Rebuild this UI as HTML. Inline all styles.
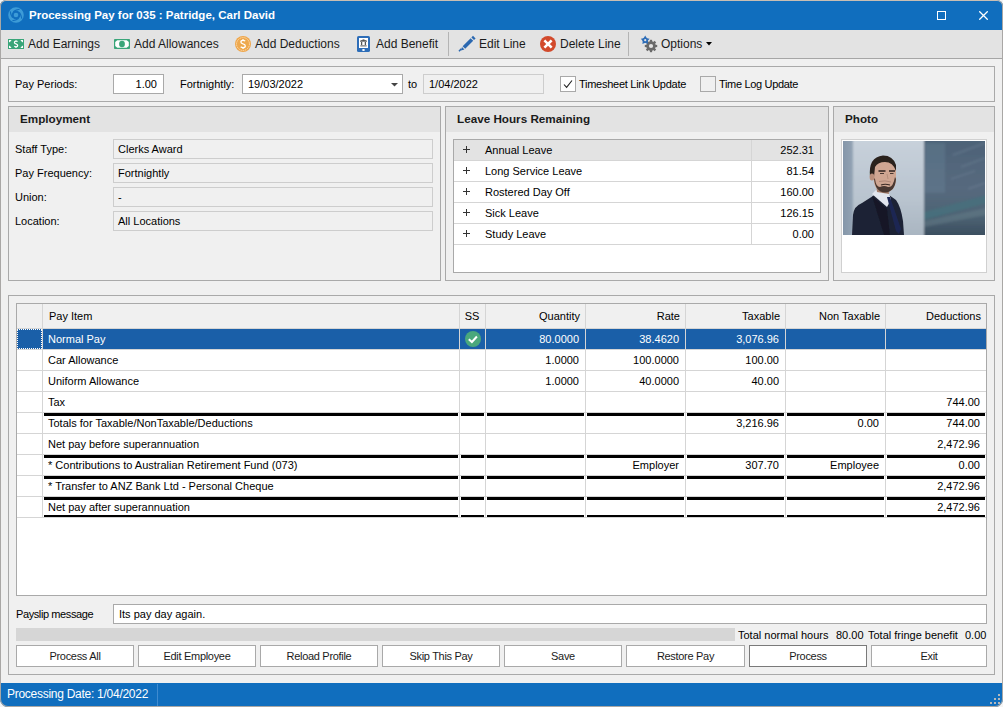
<!DOCTYPE html><html><head><meta charset="utf-8"><title>Processing Pay</title><style>
*{box-sizing:border-box;margin:0;padding:0}
html,body{width:1003px;height:707px;overflow:hidden;background:#f4f4f4}
body{font-family:"Liberation Sans",sans-serif;font-size:11px;color:#000;position:relative}
.a{position:absolute}
.t{position:absolute;white-space:nowrap;line-height:13px;margin-top:1px}
.tbt{position:absolute;top:37px;font-size:12px;line-height:14px;color:#1b1b1b;white-space:nowrap}
.grp{position:absolute;border:1px solid #a9a9a9;background:#f0f0f0}
.gh{position:absolute;left:0;top:0;right:0;height:25px;background:#e3e3e3}
.ght{position:absolute;font-weight:bold;font-size:11.7px;line-height:13px;white-space:nowrap;color:#1b1b1b}
.ro{position:absolute;border:1px solid #cdcdcd;background:#f0f0f0}
.btn{position:absolute;top:645px;height:22px;border:1px solid #a9a9a9;background:#fff;text-align:center;line-height:21px;font-size:11px;color:#1b1b1b;letter-spacing:-0.3px}
.gl{position:absolute;background:#d5d5d5}
.bl{position:absolute;background:#000;height:3px}
</style></head><body><div id="win" style="position:absolute;left:0;top:0;width:1003px;height:707px;border-radius:6px 6px 8px 8px;overflow:hidden;background:#f0f0f0">
<div class="a" style="left:0;top:0;width:1003px;height:30px;background:#106ebe"></div>
<svg class="a" style="left:8px;top:7px" width="16" height="16" viewBox="0 0 16 16">
<circle cx="8" cy="8" r="6.1" fill="none" stroke="#3d9bd7" stroke-width="3.4"/>
<circle cx="8" cy="8" r="2.3" fill="#3d9bd7"/>
<g fill="none" stroke="#106ebe" stroke-width="1.1">
<path d="M5.2 4.6Q8 2.6 11.6 2.2"/><path d="M11.4 5.2Q13.4 8 13.8 11.6"/><path d="M10.8 11.4Q8 13.4 4.4 13.8"/><path d="M4.6 10.8Q2.6 8 2.2 4.4"/>
</g></svg>
<div class="t" style="left:29px;top:7px;font-size:11.5px;font-weight:bold;color:#fff;line-height:14px">Processing Pay for 035 : Patridge, Carl David</div>
<div class="a" style="left:937px;top:11px;width:9px;height:9px;border:1px solid #fff"></div>
<svg class="a" style="left:979px;top:11px" width="9" height="9" viewBox="0 0 9 9"><path d="M0.3 0.3L8.7 8.7M8.7 0.3L0.3 8.7" stroke="#fff" stroke-width="1.25"/></svg>
<div class="a" style="left:0;top:30px;width:1003px;height:28px;background:#e3e3e3"></div>
<div class="a" style="left:0;top:58px;width:1003px;height:1px;background:#a6a6a6"></div>
<div class="tbt" style="left:28px">Add Earnings</div>
<div class="tbt" style="left:134px">Add Allowances</div>
<div class="tbt" style="left:255px">Add Deductions</div>
<div class="tbt" style="left:376px">Add Benefit</div>
<div class="tbt" style="left:479px">Edit Line</div>
<div class="tbt" style="left:560px">Delete Line</div>
<div class="tbt" style="left:661px">Options</div>
<div class="a" style="left:448px;top:32px;width:1px;height:24px;background:#b4b4b4"></div>
<div class="a" style="left:628px;top:32px;width:1px;height:24px;background:#b4b4b4"></div>
<svg class="a" style="left:8px;top:39px" width="16" height="10" viewBox="0 0 16 10"><rect width="16" height="10" fill="#3aa579"/>
<path d="M1 1h2.6Q2.6 2.6 1 3.4ZM15 1h-2.6Q13.4 2.6 15 3.4ZM1 9h2.6Q2.6 7.4 1 6.6ZM15 9h-2.6Q13.4 7.4 15 6.6Z" fill="#fff"/>
<path d="M9.6 2.6Q8.9 2.1 8 2.1Q6.4 2.1 6.4 3.4Q6.4 4.4 8 4.9Q9.7 5.4 9.7 6.6Q9.7 7.9 8 7.9Q7 7.9 6.3 7.3M8 1.2v1M8 7.9v1" fill="none" stroke="#fff" stroke-width="1.2"/></svg>
<svg class="a" style="left:114px;top:39px" width="16" height="10" viewBox="0 0 16 10"><rect width="16" height="10" rx="0.8" fill="#3aa579"/>
<path d="M3.3 1.2H12.7L14.8 3V7L12.7 8.8H3.3L1.2 7V3Z" fill="#fff"/><ellipse cx="8" cy="5" rx="2.9" ry="3.2" fill="#3aa579"/></svg>
<svg class="a" style="left:235px;top:36px" width="16" height="16" viewBox="0 0 16 16"><circle cx="8" cy="8" r="8" fill="#efa64a"/><circle cx="8" cy="8" r="6.4" fill="none" stroke="#fde6c4" stroke-width="0.9" stroke-dasharray="1.4 0.8"/><circle cx="8" cy="8" r="5.6" fill="#eda94f"/>
<path d="M10.2 5.1Q9.4 4.3 8 4.3Q5.9 4.3 5.9 5.9Q5.9 7.2 8 7.8Q10.3 8.4 10.3 9.9Q10.3 11.6 8 11.6Q6.5 11.6 5.7 10.8M8 3v1.4M8 11.6v1.4" fill="none" stroke="#fff" stroke-width="1.3"/></svg>
<svg class="a" style="left:357px;top:36px" width="13" height="16" viewBox="0 0 13 16"><rect x="0" y="0" width="13" height="16" rx="1.6" fill="#2d6db8"/><rect x="2" y="2" width="9" height="10" fill="#fff"/>
<path d="M3.2 5.2L6.5 3.7L9.8 5.2Z" fill="#555" stroke="#555" stroke-width="0.8"/><path d="M4.6 6v3M8.4 6v3" stroke="#555" stroke-width="1.3"/><path d="M3.3 9.9h6.4" stroke="#555" stroke-width="1"/><ellipse cx="6.5" cy="14" rx="1.4" ry="0.9" fill="#fff"/></svg>
<svg class="a" style="left:458px;top:34px" width="18" height="18" viewBox="0 0 18 18"><path d="M4.6 12.2L12.6 4.2L15.2 6.8L7.2 14.8Z" fill="#2b68b0"/><path d="M13.4 3.4L15 1.8L17.6 4.4L16 6Z" fill="#2b68b0"/><path d="M4 13L6.4 15.4L3 16.6Z" fill="#2b68b0"/><path d="M1 17.2L3.4 14.8" stroke="#2b68b0" stroke-width="1.6"/></svg>
<svg class="a" style="left:540px;top:36px" width="16" height="16" viewBox="0 0 16 16"><circle cx="8" cy="8" r="8" fill="#d24a2c"/><path d="M5.3 5.3L10.7 10.7M10.7 5.3L5.3 10.7" stroke="#fff" stroke-width="2.6" stroke-linecap="square"/></svg>
<svg class="a" style="left:640px;top:35px" width="18" height="18" viewBox="0 0 18 18">
<g transform="translate(11 11)"><g fill="#6a6a6a"><rect x="-1.1" y="-6.2" width="2.2" height="12.4"/><rect x="-6.2" y="-1.1" width="12.4" height="2.2"/><rect x="-1.1" y="-6.2" width="2.2" height="12.4" transform="rotate(45)"/><rect x="-1.1" y="-6.2" width="2.2" height="12.4" transform="rotate(-45)"/><circle r="4.8"/></g><circle r="2.1" fill="#e3e3e3"/></g>
<g transform="translate(5.2 5.2)"><g fill="#2d6db8"><path d="M0 -4.6L1.6 -2L4.4 -1.4L2.4 0.9L2.8 3.8L0 2.6L-2.8 3.8L-2.4 0.9L-4.4 -1.4L-1.6 -2Z"/><circle r="2.6"/></g><circle r="1.1" fill="#e3e3e3"/></g></svg>
<svg class="a" style="left:706px;top:42px" width="6" height="4" viewBox="0 0 6 4"><path d="M0 0h6L3 3.5Z" fill="#000"/></svg>
<div class="grp" style="left:8px;top:66px;width:987px;height:36px"></div>
<div class="t" style="left:15px;top:77px">Pay Periods:</div>
<div class="a" style="left:113px;top:74px;width:51px;height:20px;background:#fff;border:1px solid #a9a9a9"></div>
<div class="t" style="left:113px;top:77px;width:44px;text-align:right">1.00</div>
<div class="t" style="left:180px;top:77px">Fortnightly:</div>
<div class="a" style="left:242px;top:74px;width:161px;height:20px;background:#fff;border:1px solid #a9a9a9"></div>
<div class="t" style="left:248px;top:77px">19/03/2022</div>
<svg class="a" style="left:391px;top:83px" width="7" height="4" viewBox="0 0 7 4"><path d="M0 0h7L3.5 3.5Z" fill="#444"/></svg>
<div class="t" style="left:408px;top:77px">to</div>
<div class="ro" style="left:423px;top:74px;width:121px;height:20px"></div>
<div class="t" style="left:429px;top:77px">1/04/2022</div>
<div class="a" style="left:560px;top:76px;width:16px;height:16px;background:#fff;border:1px solid #a9a9a9"></div>
<svg class="a" style="left:562px;top:78px" width="12" height="12" viewBox="0 0 12 12"><path d="M2 6.5L4.6 9.3L10 2.5" fill="none" stroke="#222" stroke-width="1.1"/></svg>
<div class="t" style="left:579px;top:77px;letter-spacing:-0.27px">Timesheet Link Update</div>
<div class="a" style="left:700px;top:76px;width:16px;height:16px;background:#f0f0f0;border:1px solid #a9a9a9"></div>
<div class="t" style="left:719px;top:77px;letter-spacing:-0.33px">Time Log Update</div>
<div class="grp" style="left:8px;top:106px;width:433px;height:175px"><div class="gh"></div></div>
<div class="ght" style="left:20px;top:112px">Employment</div>
<div class="t" style="left:15px;top:142px">Staff Type:</div>
<div class="ro" style="left:113px;top:139px;width:320px;height:20px"></div>
<div class="t" style="left:118px;top:142px">Clerks Award</div>
<div class="t" style="left:15px;top:166px">Pay Frequency:</div>
<div class="ro" style="left:113px;top:163px;width:320px;height:20px"></div>
<div class="t" style="left:118px;top:166px">Fortnightly</div>
<div class="t" style="left:15px;top:190px">Union:</div>
<div class="ro" style="left:113px;top:187px;width:320px;height:20px"></div>
<div class="t" style="left:118px;top:190px">-</div>
<div class="t" style="left:15px;top:214px">Location:</div>
<div class="ro" style="left:113px;top:211px;width:320px;height:20px"></div>
<div class="t" style="left:118px;top:214px">All Locations</div>
<div class="grp" style="left:445px;top:106px;width:384px;height:175px"><div class="gh"></div></div>
<div class="ght" style="left:457px;top:112px">Leave Hours Remaining</div>
<div class="a" style="left:453px;top:139px;width:368px;height:134px;background:#fff;border:1px solid #a9a9a9"></div>
<div class="a" style="left:454px;top:140px;width:366px;height:20px;background:#e3e3e3"></div>
<div class="gl" style="left:454px;top:160px;width:366px;height:1px"></div>
<div class="gl" style="left:751px;top:140px;width:1px;height:20px"></div>
<svg class="a" style="left:463px;top:146px" width="7" height="7" viewBox="0 0 7 7"><path d="M3.5 0v7M0 3.5h7" stroke="#333" stroke-width="1"/></svg>
<div class="t" style="left:485px;top:143px">Annual Leave</div>
<div class="t" style="left:752px;top:143px;width:62px;text-align:right">252.31</div>
<div class="gl" style="left:454px;top:181px;width:366px;height:1px"></div>
<div class="gl" style="left:751px;top:161px;width:1px;height:20px"></div>
<svg class="a" style="left:463px;top:167px" width="7" height="7" viewBox="0 0 7 7"><path d="M3.5 0v7M0 3.5h7" stroke="#333" stroke-width="1"/></svg>
<div class="t" style="left:485px;top:164px">Long Service Leave</div>
<div class="t" style="left:752px;top:164px;width:62px;text-align:right">81.54</div>
<div class="gl" style="left:454px;top:202px;width:366px;height:1px"></div>
<div class="gl" style="left:751px;top:182px;width:1px;height:20px"></div>
<svg class="a" style="left:463px;top:188px" width="7" height="7" viewBox="0 0 7 7"><path d="M3.5 0v7M0 3.5h7" stroke="#333" stroke-width="1"/></svg>
<div class="t" style="left:485px;top:185px">Rostered Day Off</div>
<div class="t" style="left:752px;top:185px;width:62px;text-align:right">160.00</div>
<div class="gl" style="left:454px;top:223px;width:366px;height:1px"></div>
<div class="gl" style="left:751px;top:203px;width:1px;height:20px"></div>
<svg class="a" style="left:463px;top:209px" width="7" height="7" viewBox="0 0 7 7"><path d="M3.5 0v7M0 3.5h7" stroke="#333" stroke-width="1"/></svg>
<div class="t" style="left:485px;top:206px">Sick Leave</div>
<div class="t" style="left:752px;top:206px;width:62px;text-align:right">126.15</div>
<div class="gl" style="left:454px;top:244px;width:366px;height:1px"></div>
<div class="gl" style="left:751px;top:224px;width:1px;height:20px"></div>
<svg class="a" style="left:463px;top:230px" width="7" height="7" viewBox="0 0 7 7"><path d="M3.5 0v7M0 3.5h7" stroke="#333" stroke-width="1"/></svg>
<div class="t" style="left:485px;top:227px">Study Leave</div>
<div class="t" style="left:752px;top:227px;width:62px;text-align:right">0.00</div>
<div class="grp" style="left:833px;top:106px;width:162px;height:175px"><div class="gh"></div></div>
<div class="ght" style="left:845px;top:112px">Photo</div>
<div class="a" style="left:841px;top:139px;width:146px;height:134px;background:#fff;border:1px solid #d0d0d0"></div>
<svg class="a" style="left:843px;top:141px" width="142" height="94" viewBox="0 0 142 94">
<defs>
<linearGradient id="lg1" x1="0" y1="0" x2="0" y2="1"><stop offset="0" stop-color="#c9d2dc"/><stop offset="0.6" stop-color="#b9c4cf"/><stop offset="1" stop-color="#a7b3bf"/></linearGradient>
<linearGradient id="lg2" x1="0" y1="0" x2="0" y2="1"><stop offset="0" stop-color="#4d6277"/><stop offset="0.5" stop-color="#56697e"/><stop offset="0.75" stop-color="#4e6475"/><stop offset="1" stop-color="#36495a"/></linearGradient>
<linearGradient id="lg3" x1="0" y1="0" x2="1" y2="0"><stop offset="0" stop-color="#7d8fa3"/><stop offset="1" stop-color="#93a3b4"/></linearGradient>
<filter id="bl" x="-10%" y="-10%" width="120%" height="120%"><feGaussianBlur stdDeviation="1.1"/></filter>
<filter id="bl2" x="-5%" y="-5%" width="110%" height="110%"><feGaussianBlur stdDeviation="0.45"/></filter>
</defs>
<g filter="url(#bl)">
<rect x="-6" y="-6" width="154" height="106" fill="url(#lg1)"/>
<rect x="-6" y="-6" width="16" height="106" fill="url(#lg3)"/>
<rect x="81" y="-6" width="67" height="106" fill="url(#lg2)"/>
<g stroke="#8093a6" stroke-width="1.8" opacity="0.3"><path d="M110 14L142 2M118 26L142 17M108 38L132 30M125 48L142 42"/></g>
<rect x="82" y="2" width="20" height="50" fill="#6d8aa0" opacity="0.3"/>
<path d="M81 71L148 53V61L81 79Z" fill="#46707c" opacity="0.85"/>
<path d="M81 80L148 66V73L81 86Z" fill="#6a808c" opacity="0.45"/>
</g>
<g filter="url(#bl2)">
<path d="M9 94L10 74Q11 65 19 62L30 55L34 51L46 54L53 59Q58 66 60 80L61 94Z" fill="#1d2234"/>
<path d="M29 53L33 49L46 52L48 59L44 66Z" fill="#e2e6ee"/>
<path d="M44 56L47 56L58 88L56 93L53 90Z" fill="#1b2852"/>
<path d="M29 55L44 68L47 94L41 94Z" fill="#151927"/>
<path d="M33 42L45 44L46 53L34 51Z" fill="#a57e6c"/>
<path d="M30 26Q31 19 41 19Q52 19 53 28L53 40Q52 50 43 51Q33 51 31 42Z" fill="#cfa692"/>
<path d="M27 36Q25 16 40 14.5Q50 14.5 53 24L53 30Q50 21 42 21Q35 21 32 26L31 36Z" fill="#2a201c"/>
<path d="M31 37Q32 51 42 51.5Q52 51 53 38L52 36Q50 47 45 46Q41 44 37 46Q33 46 32 38Z" fill="#4a3830"/>
<path d="M38 44Q42 42.5 47 44" stroke="#3a2a24" stroke-width="1.1" fill="none"/>
<path d="M36 40.5Q42 39 48 41" stroke="#b08878" stroke-width="1" fill="none"/>
<path d="M35.5 30h7M46 30h6" stroke="#2e221e" stroke-width="1.4"/><path d="M37 32.5h4M47 32.5h3.5" stroke="#4a3730" stroke-width="1.1"/>
<path d="M44 33L45 38" stroke="#b58f7c" stroke-width="1"/>
<ellipse cx="29" cy="36" rx="2.4" ry="3.6" fill="#b98e7a"/>
</g>
</svg>
<div class="grp" style="left:8px;top:295px;width:987px;height:380px"></div>
<div class="a" style="left:16px;top:303px;width:971px;height:293px;background:#fff;border:1px solid #a9a9a9"></div>
<div class="a" style="left:17px;top:304px;width:969px;height:25px;background:#f0f0f0"></div>
<div class="gl" style="left:42px;top:304px;width:1px;height:214px"></div>
<div class="gl" style="left:459px;top:304px;width:1px;height:214px"></div>
<div class="gl" style="left:485px;top:304px;width:1px;height:214px"></div>
<div class="gl" style="left:585px;top:304px;width:1px;height:214px"></div>
<div class="gl" style="left:685px;top:304px;width:1px;height:214px"></div>
<div class="gl" style="left:785px;top:304px;width:1px;height:214px"></div>
<div class="gl" style="left:885px;top:304px;width:1px;height:214px"></div>
<div class="gl" style="left:17px;top:328px;width:969px;height:1px"></div>
<div class="t" style="left:49px;top:309px">Pay Item</div>
<div class="t" style="left:459px;top:309px;width:26px;text-align:center">SS</div>
<div class="t" style="left:485px;top:309px;width:95px;text-align:right">Quantity</div>
<div class="t" style="left:585px;top:309px;width:95px;text-align:right">Rate</div>
<div class="t" style="left:685px;top:309px;width:95px;text-align:right">Taxable</div>
<div class="t" style="left:785px;top:309px;width:95px;text-align:right">Non Taxable</div>
<div class="t" style="left:886px;top:309px;width:95px;text-align:right">Deductions</div>
<div class="gl" style="left:17px;top:349px;width:969px;height:1px"></div>
<div class="gl" style="left:17px;top:370px;width:969px;height:1px"></div>
<div class="gl" style="left:17px;top:391px;width:969px;height:1px"></div>
<div class="gl" style="left:17px;top:412px;width:969px;height:1px"></div>
<div class="gl" style="left:17px;top:433px;width:969px;height:1px"></div>
<div class="gl" style="left:17px;top:454px;width:969px;height:1px"></div>
<div class="gl" style="left:17px;top:475px;width:969px;height:1px"></div>
<div class="gl" style="left:17px;top:496px;width:969px;height:1px"></div>
<div class="gl" style="left:17px;top:517px;width:969px;height:1px"></div>
<div class="a" style="left:43px;top:329px;width:943px;height:20px;background:#1a5fa8"></div>
<div class="gl" style="left:459px;top:329px;width:1px;height:20px"></div>
<div class="gl" style="left:485px;top:329px;width:1px;height:20px"></div>
<div class="gl" style="left:585px;top:329px;width:1px;height:20px"></div>
<div class="gl" style="left:685px;top:329px;width:1px;height:20px"></div>
<div class="gl" style="left:785px;top:329px;width:1px;height:20px"></div>
<div class="gl" style="left:885px;top:329px;width:1px;height:20px"></div>
<div class="a" style="left:17px;top:329px;width:25px;height:20px;background:#1a5fa8;border:1px dotted #fff"></div>
<svg class="a" style="left:465px;top:331px" width="16" height="16" viewBox="0 0 16 16"><circle cx="8" cy="8" r="8" fill="#4aa87c"/><path d="M3.8 8.2L6.9 11L11.9 5.5" fill="none" stroke="#fff" stroke-width="2"/></svg>
<div class="t" style="left:48px;top:332px;color:#fff">Normal Pay</div>
<div class="t" style="left:484px;top:332px;width:95px;text-align:right;color:#fff">80.0000</div>
<div class="t" style="left:584px;top:332px;width:95px;text-align:right;color:#fff">38.4620</div>
<div class="t" style="left:684px;top:332px;width:95px;text-align:right;color:#fff">3,076.96</div>
<div class="t" style="left:48px;top:353px;color:#000">Car Allowance</div>
<div class="t" style="left:484px;top:353px;width:95px;text-align:right;color:#000">1.0000</div>
<div class="t" style="left:584px;top:353px;width:95px;text-align:right;color:#000">100.0000</div>
<div class="t" style="left:684px;top:353px;width:95px;text-align:right;color:#000">100.00</div>
<div class="t" style="left:48px;top:374px;color:#000">Uniform Allowance</div>
<div class="t" style="left:484px;top:374px;width:95px;text-align:right;color:#000">1.0000</div>
<div class="t" style="left:584px;top:374px;width:95px;text-align:right;color:#000">40.0000</div>
<div class="t" style="left:684px;top:374px;width:95px;text-align:right;color:#000">40.00</div>
<div class="t" style="left:48px;top:395px;color:#000">Tax</div>
<div class="t" style="left:885px;top:395px;width:95px;text-align:right;color:#000">744.00</div>
<div class="t" style="left:48px;top:416px;color:#000">Totals for Taxable/NonTaxable/Deductions</div>
<div class="t" style="left:684px;top:416px;width:95px;text-align:right;color:#000">3,216.96</div>
<div class="t" style="left:784px;top:416px;width:95px;text-align:right;color:#000">0.00</div>
<div class="t" style="left:885px;top:416px;width:95px;text-align:right;color:#000">744.00</div>
<div class="t" style="left:48px;top:437px;color:#000">Net pay before superannuation</div>
<div class="t" style="left:885px;top:437px;width:95px;text-align:right;color:#000">2,472.96</div>
<div class="t" style="left:48px;top:458px;color:#000">* Contributions to Australian Retirement Fund (073)</div>
<div class="t" style="left:584px;top:458px;width:95px;text-align:right;color:#000">Employer</div>
<div class="t" style="left:684px;top:458px;width:95px;text-align:right;color:#000">307.70</div>
<div class="t" style="left:784px;top:458px;width:95px;text-align:right;color:#000">Employee</div>
<div class="t" style="left:885px;top:458px;width:95px;text-align:right;color:#000">0.00</div>
<div class="t" style="left:48px;top:479px;color:#000">* Transfer to ANZ Bank Ltd - Personal Cheque</div>
<div class="t" style="left:885px;top:479px;width:95px;text-align:right;color:#000">2,472.96</div>
<div class="t" style="left:48px;top:500px;color:#000">Net pay after superannuation</div>
<div class="t" style="left:885px;top:500px;width:95px;text-align:right;color:#000">2,472.96</div>
<div class="bl" style="left:44px;top:413px;width:414px;height:3px"></div>
<div class="bl" style="left:461px;top:413px;width:23px;height:3px"></div>
<div class="bl" style="left:487px;top:413px;width:97px;height:3px"></div>
<div class="bl" style="left:587px;top:413px;width:97px;height:3px"></div>
<div class="bl" style="left:687px;top:413px;width:97px;height:3px"></div>
<div class="bl" style="left:787px;top:413px;width:97px;height:3px"></div>
<div class="bl" style="left:887px;top:413px;width:98px;height:3px"></div>
<div class="bl" style="left:44px;top:455px;width:414px;height:3px"></div>
<div class="bl" style="left:461px;top:455px;width:23px;height:3px"></div>
<div class="bl" style="left:487px;top:455px;width:97px;height:3px"></div>
<div class="bl" style="left:587px;top:455px;width:97px;height:3px"></div>
<div class="bl" style="left:687px;top:455px;width:97px;height:3px"></div>
<div class="bl" style="left:787px;top:455px;width:97px;height:3px"></div>
<div class="bl" style="left:887px;top:455px;width:98px;height:3px"></div>
<div class="bl" style="left:44px;top:476px;width:414px;height:3px"></div>
<div class="bl" style="left:461px;top:476px;width:23px;height:3px"></div>
<div class="bl" style="left:487px;top:476px;width:97px;height:3px"></div>
<div class="bl" style="left:587px;top:476px;width:97px;height:3px"></div>
<div class="bl" style="left:687px;top:476px;width:97px;height:3px"></div>
<div class="bl" style="left:787px;top:476px;width:97px;height:3px"></div>
<div class="bl" style="left:887px;top:476px;width:98px;height:3px"></div>
<div class="bl" style="left:44px;top:497px;width:414px;height:3px"></div>
<div class="bl" style="left:461px;top:497px;width:23px;height:3px"></div>
<div class="bl" style="left:487px;top:497px;width:97px;height:3px"></div>
<div class="bl" style="left:587px;top:497px;width:97px;height:3px"></div>
<div class="bl" style="left:687px;top:497px;width:97px;height:3px"></div>
<div class="bl" style="left:787px;top:497px;width:97px;height:3px"></div>
<div class="bl" style="left:887px;top:497px;width:98px;height:3px"></div>
<div class="bl" style="left:44px;top:515px;width:414px;height:2px"></div>
<div class="bl" style="left:461px;top:515px;width:23px;height:2px"></div>
<div class="bl" style="left:487px;top:515px;width:97px;height:2px"></div>
<div class="bl" style="left:587px;top:515px;width:97px;height:2px"></div>
<div class="bl" style="left:687px;top:515px;width:97px;height:2px"></div>
<div class="bl" style="left:787px;top:515px;width:97px;height:2px"></div>
<div class="bl" style="left:887px;top:515px;width:98px;height:2px"></div>
<div class="t" style="left:16px;top:607px;letter-spacing:-0.4px">Payslip message</div>
<div class="a" style="left:113px;top:604px;width:874px;height:20px;background:#fff;border:1px solid #a9a9a9"></div>
<div class="t" style="left:119px;top:607px">Its pay day again.</div>
<div class="a" style="left:16px;top:628px;width:719px;height:13px;background:#d6d6d6"></div>
<div class="t" style="left:738px;top:628px">Total normal hours</div>
<div class="t" style="left:836px;top:628px">80.00</div>
<div class="t" style="left:868px;top:628px">Total fringe benefit</div>
<div class="t" style="left:965px;top:628px">0.00</div>
<div class="btn" style="left:16px;width:118px;">Process All</div>
<div class="btn" style="left:138px;width:118px;">Edit Employee</div>
<div class="btn" style="left:260px;width:118px;">Reload Profile</div>
<div class="btn" style="left:382px;width:118px;">Skip This Pay</div>
<div class="btn" style="left:504px;width:118px;">Save</div>
<div class="btn" style="left:626px;width:119px;">Restore Pay</div>
<div class="btn" style="left:749px;width:118px;border-color:#7a7a7a;">Process</div>
<div class="btn" style="left:871px;width:116px;">Exit</div>
<div class="a" style="left:0;top:683px;width:1003px;height:24px;background:#106ebe"></div>
<div class="t" style="left:7px;top:686px;color:#fff;font-size:12px;line-height:14px;letter-spacing:-0.27px">Processing Date: 1/04/2022</div>
<div class="a" style="left:157px;top:684px;width:1px;height:22px;background:#3f8bd0"></div>
<div class="a" style="left:990px;top:702px;width:2px;height:2px;background:#b4b8bc"></div><div class="a" style="left:994px;top:702px;width:2px;height:2px;background:#b4b8bc"></div><div class="a" style="left:998px;top:702px;width:2px;height:2px;background:#b4b8bc"></div><div class="a" style="left:994px;top:698px;width:2px;height:2px;background:#b4b8bc"></div><div class="a" style="left:998px;top:698px;width:2px;height:2px;background:#b4b8bc"></div><div class="a" style="left:998px;top:694px;width:2px;height:2px;background:#b4b8bc"></div>
</div><div class="a" style="left:0;top:0;width:1003px;height:707px;border:1px solid #a9a7a5;border-top-color:#c9beb3;border-radius:6px 6px 8px 8px;pointer-events:none"></div>
</body></html>
